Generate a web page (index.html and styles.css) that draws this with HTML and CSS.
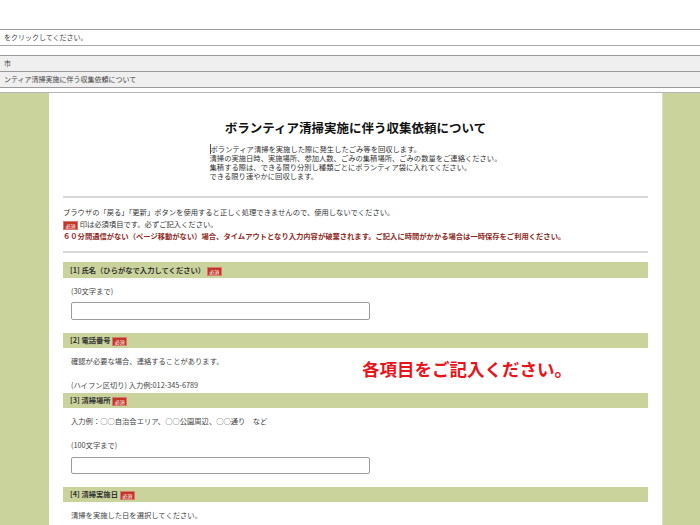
FILE: index.html
```html
<!DOCTYPE html>
<html lang="ja">
<head>
<meta charset="utf-8">
<title>ボランティア清掃実施に伴う収集依頼について</title>
<link rel="stylesheet" href="styles.css">
</head>
<body>
<div class="top-space"></div>
<div class="bar bar-white">をクリックしてください。</div>
<div class="bar-gap"></div>
<div class="bar bar-gray">市</div>
<div class="bar bar-gray bar-last">ンティア清掃実施に伴う収集依頼について</div>
<div class="bar-gap2"></div>
<div class="layout">
  <div class="side side-left"></div>
  <main class="content">
    <h1 class="title">ボランティア清掃実施に伴う収集依頼について</h1>
    <div class="desc-wrap">
      <div class="desc">
        <div><span class="caret">ボ</span>ランティア清掃を実施した際に発生したごみ等を回収します。</div>
        <div>清掃の実施日時、実施場所、参加人数、ごみの集積場所、ごみの数量をご連絡ください。</div>
        <div>集積する際は、できる限り分別し種類ごとにボランティア袋に入れてください。</div>
        <div>できる限り速やかに回収します。</div>
      </div>
    </div>
    <hr class="rule rule-1">
    <div class="notice">
      <div>ブラウザの「戻る」「更新」ボタンを使用すると正しく処理できませんので、使用しないでください。</div>
      <div><span class="badge">必須</span> 印は必須項目です。必ずご記入ください。</div>
      <div class="warn">６０分間通信がない（ページ移動がない）場合、タイムアウトとなり入力内容が破棄されます。ご記入に時間がかかる場合は一時保存をご利用ください。</div>
    </div>
    <hr class="rule rule-2">

    <div class="q-head q1">[1] 氏名（ひらがなで入力してください） <span class="badge">必須</span></div>
    <div class="q-body">
      <div class="q-text t-first">(30文字まで)</div>
      <div class="input i-1"></div>
    </div>

    <div class="q-head q2">[2] 電話番号 <span class="badge">必須</span></div>
    <div class="q-body">
      <div class="q-text t-first">確認が必要な場合、連絡することがあります。</div>
      <div class="q-text t-next">(ハイフン区切り) 入力例:012-345-6789</div>
    </div>

    <div class="q-head q3">[3] 清掃場所 <span class="badge">必須</span></div>
    <div class="q-body">
      <div class="q-text t-first">入力例：○○自治会エリア、○○公園周辺、○○通り　など</div>
      <div class="q-text t-next">(100文字まで)</div>
      <div class="input i-3"></div>
    </div>

    <div class="q-head q4">[4] 清掃実施日 <span class="badge">必須</span></div>
    <div class="q-body">
      <div class="q-text t-first">清掃を実施した日を選択してください。</div>
    </div>

    <div class="overlay">各項目をご記入ください。</div>
  </main>
  <div class="side side-right"></div>
</div>
</body>
</html>
```

FILE: styles.css
```css
html, body {
  margin: 0;
  padding: 0;
  background: #ffffff;
  font-family: "Noto Sans CJK JP", "Noto Sans", sans-serif;
  color: #333333;
  overflow: hidden;
  height: 525px;
}

.top-space {
  height: 29px;
}

.bar {
  height: 15px;
  line-height: 15px;
  font-size: 7px;
  padding-left: 4px;
  color: #444444;
  border-top: 1px solid #9a9a9a;
  box-sizing: content-box;
  white-space: nowrap;
  overflow: hidden;
}

.bar-white {
  background: #ffffff;
  border-bottom: 1px solid #a8a8a8;
}

.bar-gap {
  height: 9px;
}

.bar-gray {
  background: #efefef;
}

.bar-last {
  border-bottom: 1px solid #9a9a9a;
}

.bar-gap2 {
  height: 4px;
  border-bottom: 1px solid #b5b5b5;
}

.layout {
  display: flex;
  height: 440px;
}

.side {
  background: #cbd39c;
}

.side-left {
  width: 49px;
}

.side-right {
  width: 38px;
  border-left: 1px solid #d9dfb8;
  box-sizing: border-box;
}

.content {
  position: relative;
  width: 613px;
  background: #ffffff;
  padding: 0 14px;
  box-sizing: border-box;
}

.title {
  margin: 27px 0 0 0;
  font-size: 12.5px;
  line-height: 16px;
  font-weight: bold;
  text-align: center;
  color: #111111;
}

.desc-wrap {
  text-align: center;
  margin-top: 9px;
}

.desc {
  display: inline-block;
  text-align: left;
  font-size: 7.3px;
  line-height: 9px;
  color: #333333;
  white-space: nowrap;
}

.caret {
  border-left: 1px solid #555555;
}

.rule {
  border: 0;
  height: 2px;
  background: #d9d9d9;
  margin: 0;
}

.rule-1 {
  margin-top: 12px;
}

.notice {
  margin-top: 8px;
  font-size: 7.3px;
  line-height: 12px;
  color: #333333;
  white-space: nowrap;
}

.warn {
  color: #8e2a1e;
  font-weight: bold;
}

.rule-2 {
  margin-top: 9px;
}

.badge {
  display: inline-block;
  background: #c23427;
  color: #ffffff;
  font-size: 5px;
  line-height: 7px;
  height: 7px;
  padding: 0 1.5px;
  border: 1px solid #d87a6e;
  vertical-align: middle;
  font-weight: normal;
}

.q-head {
  background: #cbd39c;
  height: 16px;
  line-height: 16px;
  font-size: 7.3px;
  font-weight: bold;
  color: #333333;
  padding-left: 7px;
  white-space: nowrap;
}

.q1 {
  margin-top: 9px;
}

.q2 {
  margin-top: 13px;
  height: 15px;
  line-height: 15px;
}

.q3 {
  margin-top: 2px;
  height: 15px;
  line-height: 15px;
}

.q4 {
  margin-top: 13px;
  height: 15px;
  line-height: 15px;
}

.q-body {
  padding-left: 8px;
}

.q-text {
  font-size: 7.3px;
  line-height: 12px;
  color: #444444;
  white-space: nowrap;
}

.t-first {
  margin-top: 7px;
}

.t-next {
  margin-top: 12px;
}

.input {
  width: 297px;
  height: 16px;
  border: 1px solid #9c9c9c;
  border-radius: 2px;
  background: #ffffff;
  box-sizing: content-box;
}

.i-1 {
  margin-top: 5px;
}

.i-3 {
  margin-top: 6px;
  height: 15px;
}

.overlay {
  position: absolute;
  left: 313px;
  top: 265px;
  font-size: 17.5px;
  line-height: 22px;
  font-weight: bold;
  color: #e8141c;
  white-space: nowrap;
}
```
